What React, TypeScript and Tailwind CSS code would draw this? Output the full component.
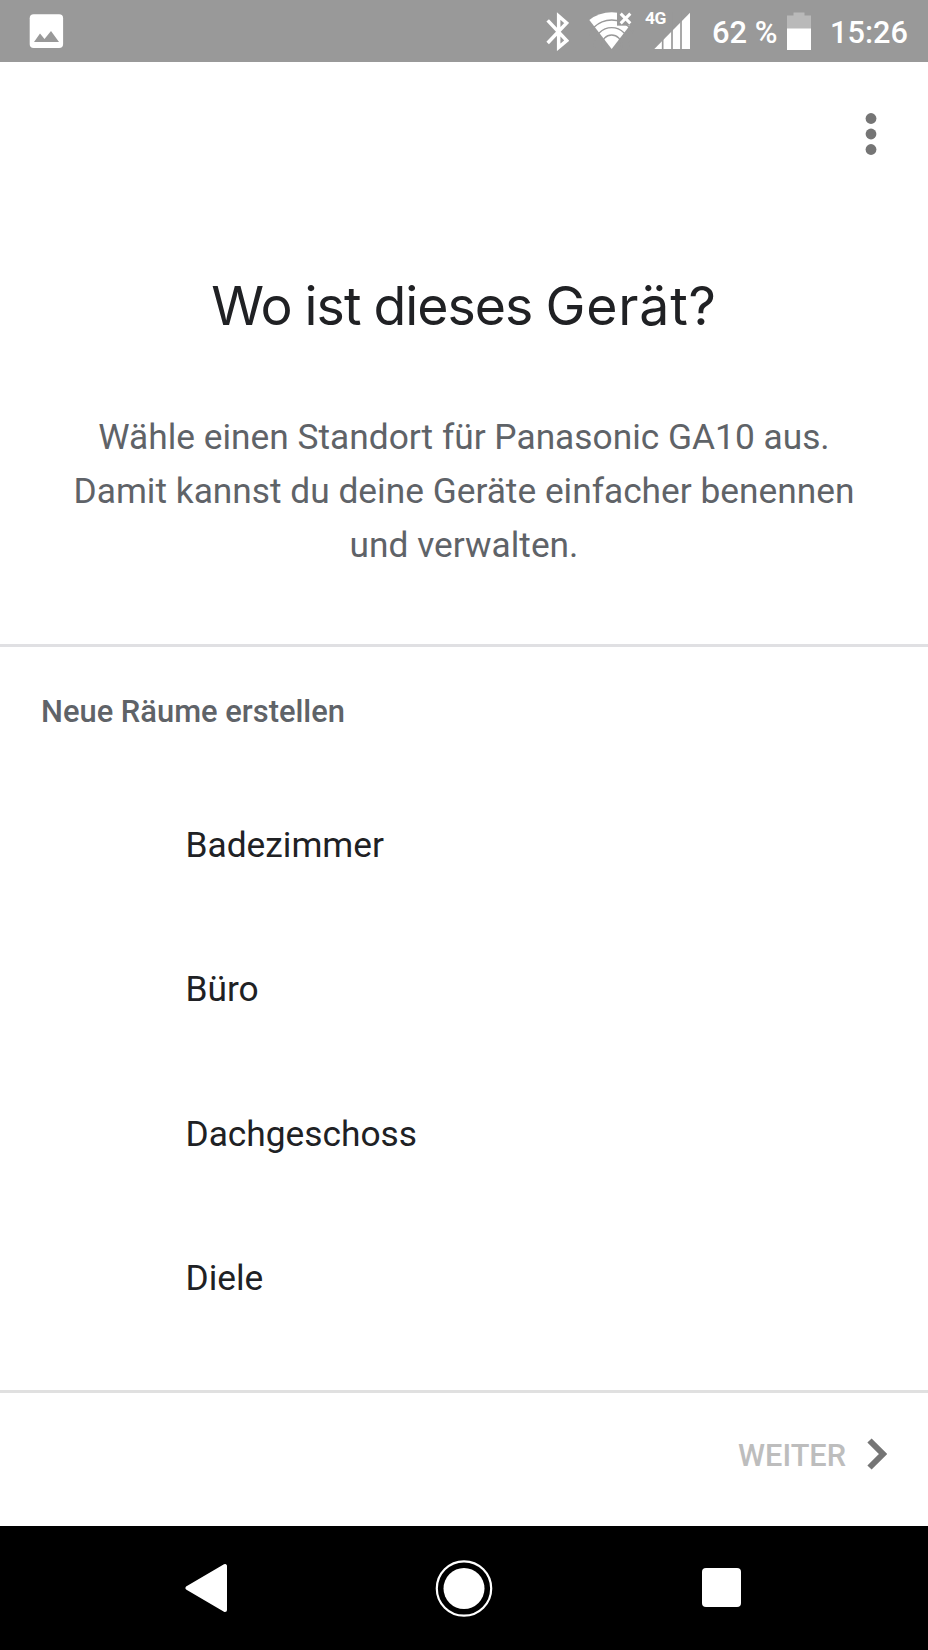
import React from 'react';

const rooms = ['Badezimmer', 'Büro', 'Dachgeschoss', 'Diele'];

const StatusBar: React.FC = () => (
  <header className="h-[62px] shrink-0 bg-[#999999] flex items-start justify-between pt-3 pl-[29px] text-white">
    <svg className="w-[35px] h-[35px] mt-0.5" viewBox="0 0 35 35">
      <rect x="0.7" y="0.3" width="33.4" height="33.6" rx="4" fill="currentColor" />
      <path d="M5 28 L11 19.5 L15.5 25 L22 17 L30 28 Z" fill="#999999" />
    </svg>
    <div className="flex items-start w-[382px]">
      <svg className="w-[23px] h-[39px]" viewBox="0 0 69 117" fill="none" stroke="currentColor" strokeWidth="10.5">
        <path d="M5 25 L62 86 L38 106 L38 12 L62 33 L5 93" />
      </svg>
      <svg className="w-[45px] h-[38px] ml-5" viewBox="0 0 135 114">
        <path d="M68 111 L1 24 Q31 1 68 1 Q105 1 135 24 Z" fill="currentColor" />
        <g fill="none" stroke="#999999" strokeWidth="4">
          <circle cx="68" cy="99" r="75" />
          <circle cx="68" cy="99" r="52" />
          <circle cx="68" cy="99" r="30" />
        </g>
        <path d="M84 0 H135 V41 H84 Z" fill="#999999" />
        <path d="M95 5 L124 34 M124 5 L95 34" stroke="currentColor" strokeWidth="9" />
      </svg>
      <div className="relative w-[45px] h-[38px] ml-[11px]">
        <span className="absolute left-0 -top-[6px] font-bold text-[17.4px] leading-6 tracking-[-0.5px]">4G</span>
        <svg className="w-[45px] h-[38px]" viewBox="0 0 135 114">
          <path d="M28 111 L135 2 V111 Z" fill="currentColor" />
          <path d="M53 0 V114 M81 0 V114 M108 0 V114" stroke="#999999" strokeWidth="5" />
        </svg>
      </div>
      <span className="w-[66px] mt-px ml-[22px] font-medium text-[30.9px] leading-10 whitespace-nowrap">62 %</span>
      <svg className="w-6 h-[38px] ml-[9px]" viewBox="0 0 24 38">
        <path d="M6.500 0.500 H17.500 V3.500 H24 V17 H0 V3.500 H6.500 Z" fill="#b9b9b9" />
        <path d="M0 16.500 H24 V38 H0 Z" fill="currentColor" />
      </svg>
      <span className="mt-px ml-[19px] font-medium text-[30.7px] leading-10 whitespace-nowrap">15:26</span>
    </div>
  </header>
);

const NavBar: React.FC = () => (
  <nav className="h-[124px] shrink-0 bg-black flex items-start pt-[34px] text-white">
    <svg className="w-[42px] h-[56px] ml-[185px]" viewBox="0 0 42 56">
      <path d="M2.500 28 L40 6 V50 Z" fill="currentColor" stroke="currentColor" strokeWidth="4" strokeLinejoin="round" />
    </svg>
    <svg className="w-[58px] h-[58px] ml-[208px]" viewBox="0 0 58 58">
      <circle cx="29" cy="28.500" r="27.200" fill="none" stroke="currentColor" strokeWidth="2.200" />
      <circle cx="29" cy="28.500" r="20.500" fill="currentColor" />
    </svg>
    <div className="w-[39px] h-[39px] ml-[209px] mt-2 rounded-[4px] bg-white" />
  </nav>
);

const App: React.FC = () => {
  return (
    <div className="w-[928px] h-[1650px] flex flex-col bg-white font-['Roboto',sans-serif] overflow-hidden">
      <StatusBar />

      <section className="h-[585px] shrink-0 flex flex-col border-b-[3px] border-[#e0e0e3]">
        <button className="self-end mt-[50px] mr-[51px]" aria-label="Menü">
          <svg className="w-[12px] h-[44px]" viewBox="0 0 12 44" fill="#757575">
            <circle cx="6" cy="6.500" r="5.400" />
            <circle cx="6" cy="22" r="5.400" />
            <circle cx="6" cy="37.500" r="5.400" />
          </svg>
        </button>
        <h1 className="mt-[114px] text-center font-['Inter',sans-serif] text-[53.6px] leading-[72px] tracking-[-1px] [word-spacing:-1px] text-[#202124]">
          Wo ist dieses <span className="tracking-[0.8px]">Gerät?</span>
        </h1>
        <p className="mt-[68px] text-center text-[35.3px] leading-[54px] text-[#5f6368]">
          Wähle einen Standort für Panasonic GA10 aus.
          <br />
          Damit kannst du deine Geräte einfacher benennen
          <br />
          und verwalten.
        </p>
      </section>

      <section className="h-[743px] shrink-0">
        <h2 className="pt-[45px] pl-[41px] font-medium text-[30.9px] leading-10 text-[#5f6368]">Neue Räume erstellen</h2>
        <ul className="mt-[41px]">
          {rooms.map((room) => (
            <li key={room} className="h-[144.4px] flex items-center pl-[185.5px] text-[35.3px] text-[#202124]">
              {room}
            </li>
          ))}
        </ul>
      </section>

      <footer className="h-[136px] shrink-0 border-t-[3px] border-[#e0e0e0] flex items-start justify-end pr-[41px]">
        <span className="mt-[43px] font-medium text-[30.7px] leading-10 text-[#bdbdbd]">WEITER</span>
        <svg className="w-[20px] h-[32px] mt-[45px] ml-[21px]" viewBox="0 0 20 32" fill="none" stroke="#757575" strokeWidth="6">
          <path d="M2.500 2.500 L16 16 L2.500 29.500" />
        </svg>
      </footer>

      <NavBar />
    </div>
  );
};

export default App;
